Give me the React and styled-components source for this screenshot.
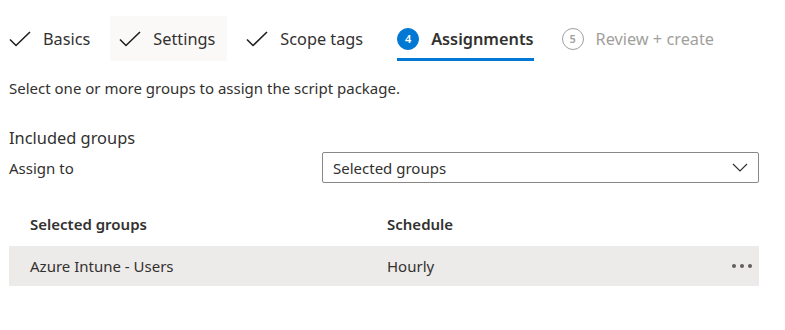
import styled, { createGlobalStyle } from "styled-components";

const GlobalStyle = createGlobalStyle`
    body {
        margin: 0;
        background: #fff;
        font-family: "Segoe UI", "Noto Sans", "Open Sans", sans-serif;
        color: #323130;
    }
`

const Page = styled.div`
    width: 785px;
    height: 330px;
    padding: 16px 9px 0;
    box-sizing: border-box;
`

const Tabs = styled.div`
    display: flex;
    align-items: stretch;
    height: 45px;
`

const Tab = styled.div`
    display: flex;
    align-items: center;
    gap: 12px;
    padding: ${({hover}) => hover ? '3px 12px 0 9px' : '3px 0 0'};
    margin-right: ${({gap}) => gap}px;
    background: ${({hover}) => hover ? '#faf9f8' : 'transparent'};
    font-size: 16.3px;
    font-weight: ${({active}) => active ? 600 : 400};
    color: ${({muted}) => muted ? '#a19f9d' : '#323130'};
    border-bottom: 3px solid ${({active}) => active ? '#0078d4' : 'transparent'};
    box-sizing: border-box;
`

const StepNum = styled.span`
    width: 22px;
    height: 22px;
    border-radius: 50%;
    box-sizing: border-box;
    display: flex;
    align-items: center;
    justify-content: center;
    font-size: 11px;
    font-weight: 600;
    background: ${({done}) => done ? '#0078d4' : '#fff'};
    color: ${({done}) => done ? '#fff' : '#a19f9d'};
    border: 1px solid ${({done}) => done ? '#0078d4' : '#a19f9d'};
`

const Intro = styled.p`
    margin: 17px 0 0;
    font-size: 15px;
`

const SectionTitle = styled.h2`
    margin: 28px 0 0;
    font-size: 16.4px;
    font-weight: 400;
`

const FieldRow = styled.div`
    margin-top: 3px;
    display: grid;
    grid-template-columns: 313px 437px;
    align-items: center;
    font-size: 15px;
`

const Select = styled.div`
    height: 31px;
    border: 1px solid #8a8886;
    border-radius: 2px;
    box-sizing: border-box;
    display: flex;
    align-items: center;
    justify-content: space-between;
    padding: 0 10px;
`

const Table = styled.div`
    margin-top: 26px;
    width: 750px;
    font-size: 15px;
`

const Row = styled.div`
    display: grid;
    grid-template-columns: 357px 1fr 27px;
    align-items: center;
    height: ${({head}) => head ? 30 : 40}px;
    padding-left: 21px;
    background: ${({head}) => head ? 'transparent' : '#edebe9'};
    font-weight: ${({head}) => head ? 600 : 400};
    margin-bottom: ${({head}) => head ? 7 : 0}px;
`

const More = styled.span`
    display: flex;
    gap: 4px;
    & > i {
        width: 4px;
        height: 4px;
        border-radius: 50%;
        background: #605e5c;
    }
`

const Check = () => (
    <svg width="22" height="16" viewBox="0 0 22 16">
        <path d="M1 8.5 L7 14.5 L21 1" fill="none" stroke="#201f1e" strokeWidth="1.6" />
    </svg>
)

const Chevron = () => (
    <svg width="16" height="9" viewBox="0 0 16 9">
        <path d="M1 1 L8 8 L15 1" fill="none" stroke="#323130" strokeWidth="1.2" />
    </svg>
)

export default function App() {
    return (
        <Page>
            <GlobalStyle />
            <Tabs>
                <Tab gap={20}><Check />Basics</Tab>
                <Tab hover gap={19}><Check />Settings</Tab>
                <Tab gap={34}><Check />Scope tags</Tab>
                <Tab active gap={28}><StepNum done>4</StepNum>Assignments</Tab>
                <Tab muted><StepNum>5</StepNum>Review + create</Tab>
            </Tabs>
            <Intro>Select one or more groups to assign the script package.</Intro>
            <SectionTitle>Included groups</SectionTitle>
            <FieldRow>
                <span>Assign to</span>
                <Select>
                    <span>Selected groups</span>
                    <Chevron />
                </Select>
            </FieldRow>
            <Table>
                <Row head>
                    <span>Selected groups</span>
                    <span>Schedule</span>
                    <span />
                </Row>
                <Row>
                    <span>Azure Intune - Users</span>
                    <span>Hourly</span>
                    <More><i /><i /><i /></More>
                </Row>
            </Table>
        </Page>
    )
}
